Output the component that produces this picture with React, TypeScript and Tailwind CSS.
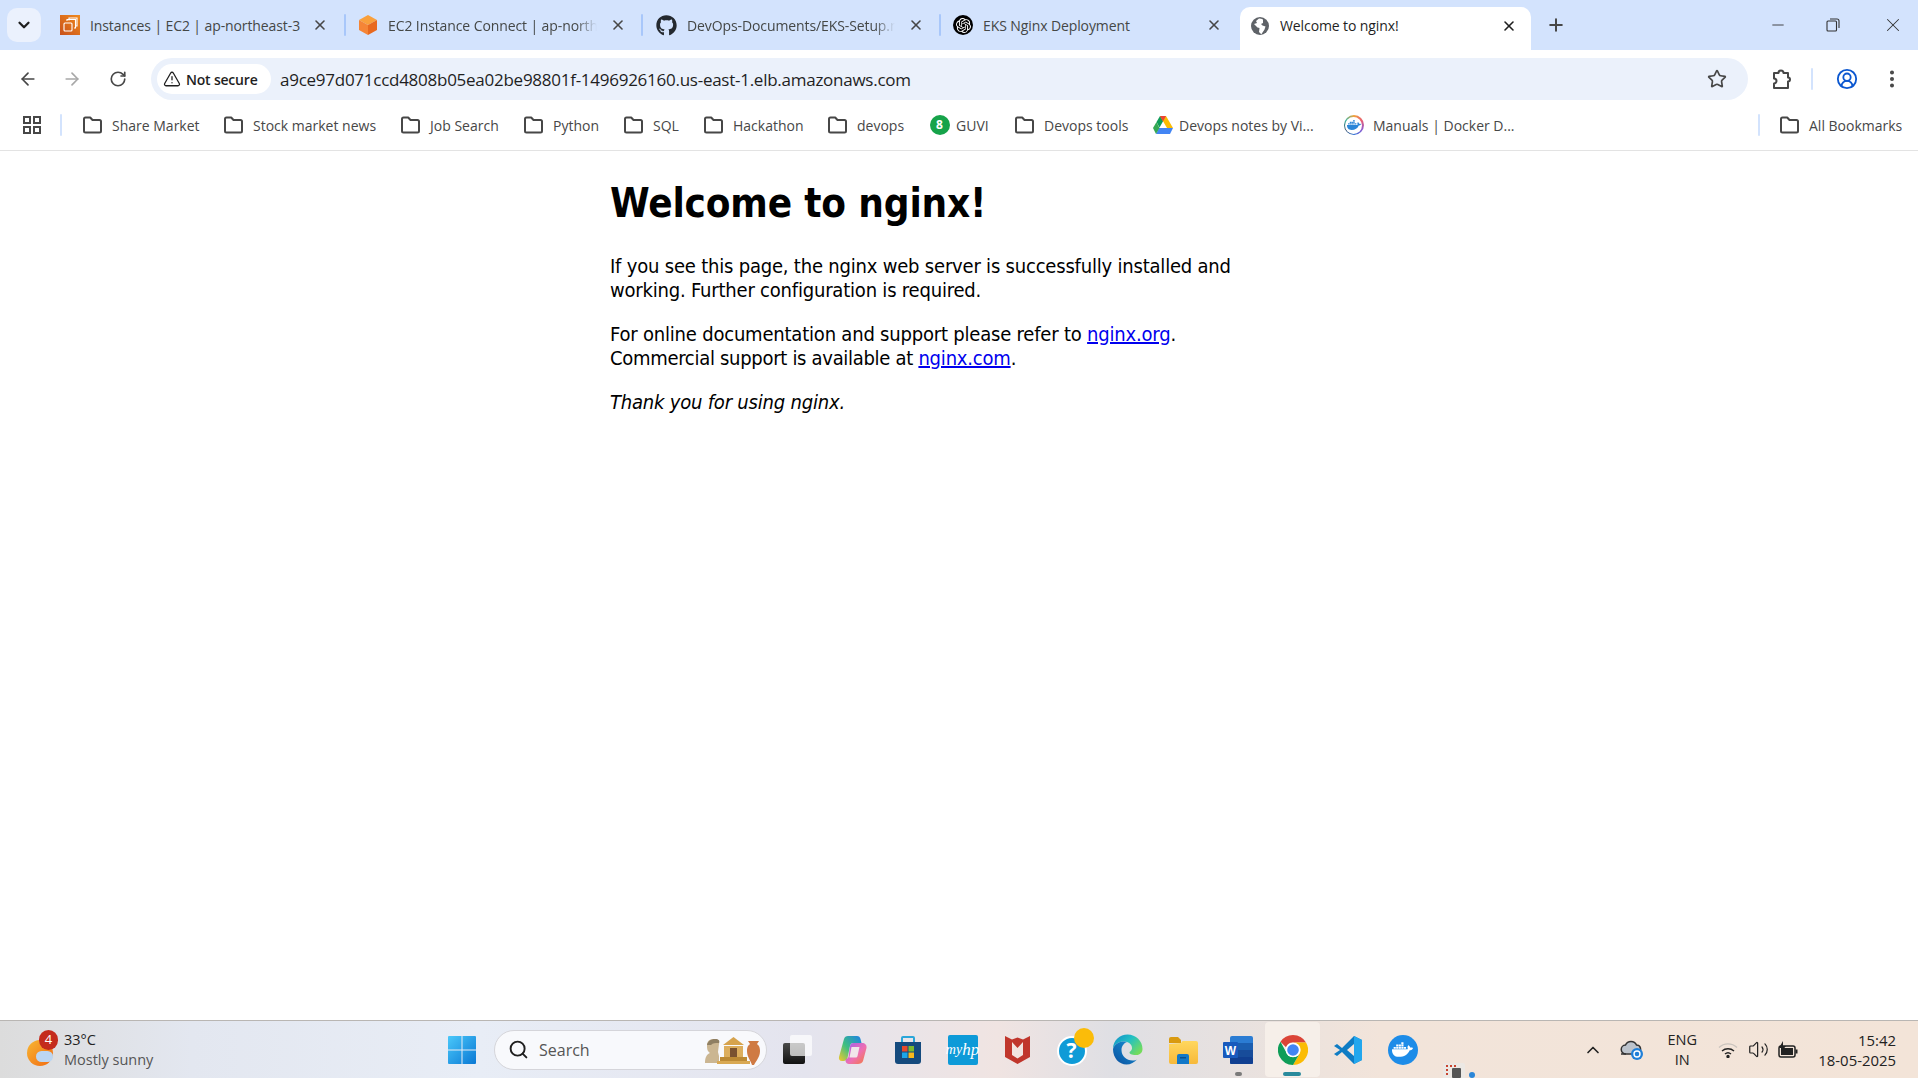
import React from "react";
import { ChevronDown, X, Plus, Minus, ArrowLeft, ArrowRight, RotateCw, Star, TriangleAlert, CircleUserRound, EllipsisVertical, Search, ChevronUp, Volume2 } from "lucide-react";
import { FaGithub, FaDocker } from "react-icons/fa";
import { SiOpenai } from "react-icons/si";

const Folder = () => (
  <svg width="21" height="18" viewBox="0 0 21 18" fill="none" stroke="#474747" strokeWidth="2" className="shrink-0">
    <path d="M2 3a1.5 1.5 0 0 1 1.5-1.5h4.7l2.3 2.5h7A1.5 1.5 0 0 1 19 5.500V15a1.500 1.500 0 0 1-1.500 1.500h-14A1.500 1.500 0 0 1 2 15z" strokeLinejoin="round" />
  </svg>
);
const Ec2 = () => (
  <svg width="20" height="20" viewBox="0 0 20 20" className="shrink-0">
    <defs><linearGradient id="ec" x1="0" y1="1" x2="1" y2="0"><stop offset="0" stopColor="#c8511b" /><stop offset="1" stopColor="#f08a1d" /></linearGradient></defs>
    <rect width="20" height="20" fill="url(#ec)" />
    <g fill="none" stroke="#fff" strokeWidth="1.100"><rect x="4" y="8" width="8" height="8" rx="1" /><path d="M7 6V4.500h8.500V13H14" /><path d="M9 5.500V3h8v8h-1.500" /></g>
  </svg>
);
const Cube = () => (
  <svg width="20" height="22" viewBox="0 0 20 22" className="shrink-0">
    <polygon points="10,1 19,6 10,11 1,6" fill="#f9a03c" /><polygon points="1,6 10,11 10,21 1,16" fill="#f58536" /><polygon points="19,6 10,11 10,21 19,16" fill="#e8691f" />
  </svg>
);
const GlobeFill = () => (
  <svg width="20" height="20" viewBox="0 0 20 20" className="shrink-0">
    <circle cx="10" cy="10" r="9" fill="#5f6368" />
    <path d="M9 2.500 6 5 7 7l-3 1 3.500 3.500 2 .5-.5 4 2 2 .5-.1 3-4.400 1-3-3-1-1.500-1.500 2-1V3.500A7.500 7.500 0 0 0 9 2.500z" fill="#fff" />
  </svg>
);
const Drive = () => (
  <svg width="20" height="18" viewBox="0 0 20 18" className="shrink-0">
    <polygon points="7,0 13,0 6.500,11.500 3.500,6" fill="#0f9d58" /><polygon points="13,0 20,12 14,12 7,0" fill="#fbbc04" /><polygon points="20,12 17,18 3,18 6,12" fill="#4285f4" /><polygon points="0,12 3.500,6 6.500,12 3,18" fill="#34a853" /><polygon points="7,0 13,0 10,5.500" fill="#ea4335" />
  </svg>
);
const Guvi = () => (
  <span className="flex h-5 w-5 shrink-0 items-center justify-center rounded-full bg-[#16a34a] text-[12px] font-bold leading-none text-white">8</span>
);
const DockerBadge = () => (
  <span className="flex h-5 w-5 shrink-0 items-center justify-center rounded-full bg-[conic-gradient(#f2a33a,#e85d75,#8e5bd0,#2a6fd6,#1f3d5c,#3fb5a0,#f2a33a)]">
    <span className="flex h-[17px] w-[17px] items-center justify-center rounded-full bg-white"><FaDocker size={14} color="#2a86d8" /></span>
  </span>
);
const Grid = () => (
  <svg width="20" height="18" viewBox="0 0 20 18" fill="none" stroke="#474747" strokeWidth="2" className="shrink-0">
    <rect x="2" y="1" width="6" height="6" /><rect x="12" y="1" width="6" height="6" /><rect x="2" y="11" width="6" height="6" /><rect x="12" y="11" width="6" height="6" />
  </svg>
);
const Puzzle = () => (
  <svg width="22" height="22" viewBox="0 0 22 22" fill="none" stroke="#474747" strokeWidth="2" strokeLinejoin="round" className="shrink-0">
    <path d="M4 5h4.500a2.500 2.500 0 0 1 5 0H18v4.500a2 2 0 0 1 0 4V20H4v-4.500a2.500 2.500 0 0 0 0-5z" />
  </svg>
);

const Tab = ({ icon, title, className, textClass }: { icon: React.ReactNode; title: string; className: string; textClass: string }) => (
  <div className={`flex h-full shrink-0 items-center ${className}`}>
    {icon}
    <span className={`ml-[10px] overflow-hidden whitespace-nowrap text-[14px] tracking-[-0.1px] text-[#444746] ${textClass}`}>{title}</span>
  </div>
);
const TabClose = ({ color = "#474747" }: { color?: string }) => <X size={16} color={color} strokeWidth={2.4} className="shrink-0" />;
const Sep = ({ className }: { className: string }) => <span className={`h-[22px] w-[2px] shrink-0 rounded bg-[#a8c7fa] ${className}`} />;

const Mark = ({ icon, label, w }: { icon: React.ReactNode; label: string; w: string }) => (
  <div className="flex shrink-0 items-center gap-[9px]">
    <span className="flex w-[21px] justify-center">{icon}</span>
    <span className={`whitespace-nowrap text-[14px] text-[#474747] ${w}`}>{label}</span>
  </div>
);

const TaskIcon = ({ children }: { children: React.ReactNode }) => (
  <div className="flex h-[55px] w-[55px] shrink-0 items-center justify-center">{children}</div>
);

export default function App() {
  return (
    <div className="flex h-[1078px] w-[1918px] flex-col overflow-hidden bg-white font-['Open_Sans','Noto_Sans',sans-serif]">
      {/* Tab strip */}
      <div className="flex h-[50px] shrink-0 items-center bg-[#d3e3fd] pl-[7px]">
        <div className="flex h-[34px] w-[34px] shrink-0 items-center justify-center rounded-[10px] bg-[#ebf1fd]">
          <ChevronDown size={18} color="#1f1f1f" strokeWidth={3} />
        </div>
        <Tab className="ml-[19px] w-[252px]" icon={<Ec2 />} title="Instances | EC2 | ap-northeast-3" textClass="w-[215px]" />
        <TabClose />
        <Sep className="ml-[16px]" />
        <Tab className="ml-[12px] w-[252px]" icon={<Cube />} title="EC2 Instance Connect | ap-northeast-3" textClass="w-[209px] [mask-image:linear-gradient(90deg,#000_90%,transparent)]" />
        <TabClose />
        <Sep className="ml-[15px]" />
        <Tab className="ml-[13px] w-[252px]" icon={<FaGithub size={21} color="#24292f" className="shrink-0" />} title="DevOps-Documents/EKS-Setup.md" textClass="w-[208px] [mask-image:linear-gradient(90deg,#000_90%,transparent)]" />
        <TabClose />
        <Sep className="ml-[15px]" />
        <Tab className="ml-[12px] w-[253px]" icon={<span className="flex h-5 w-5 shrink-0 items-center justify-center rounded-full bg-black"><SiOpenai size={15} color="#fff" /></span>} title="EKS Nginx Deployment" textClass="w-[205px]" />
        <TabClose />
        {/* Active tab */}
        <div className="relative ml-[18px] flex h-[43px] w-[291px] shrink-0 items-center self-end rounded-t-[10px] bg-white pb-[6px] pl-[10px]">
          <GlobeFill />
          <span className="ml-[10px] w-[221px] whitespace-nowrap text-[14px] tracking-[-0.1px] text-[#1f1f1f]">Welcome to nginx!</span>
          <TabClose color="#1f1f1f" />
        </div>
        <Plus size={20} color="#474747" strokeWidth={2.4} className="ml-[15px] shrink-0" />
        <div className="ml-auto flex items-center">
          <Minus size={18} color="#333" strokeWidth={1.200} className="mr-[38px]" />
          <svg width="16" height="16" viewBox="0 0 16 16" fill="none" stroke="#333" strokeWidth="1.100" className="mr-[41px]"><rect x="2" y="4" width="9.500" height="10" rx="1" /><path d="M5 2h7a2 2 0 0 1 2 2v7" /></svg>
          <X size={22} color="#333" strokeWidth={1.100} className="mr-[14px]" />
        </div>
      </div>

      {/* Toolbar */}
      <div className="flex h-[56px] shrink-0 items-center rounded-t-[10px] bg-white pt-[2px]">
        <ArrowLeft size={20} color="#474747" strokeWidth={2} className="ml-[18px] shrink-0" />
        <ArrowRight size={20} color="#a8a8a8" strokeWidth={2} className="ml-[24px] shrink-0" />
        <RotateCw size={18} color="#474747" strokeWidth={2.2} className="ml-[27px] shrink-0" />
        <div className="ml-[24px] flex h-[42px] w-[1597px] shrink-0 items-center rounded-full bg-[#ebf1fb] pl-[6px]">
          <div className="flex h-[30px] w-[114px] shrink-0 items-center rounded-full bg-white pl-[6px]">
            <TriangleAlert size={18} color="#1f1f1f" strokeWidth={1.700} className="shrink-0" />
            <span className="ml-[5px] whitespace-nowrap text-[14px] font-semibold tracking-[-0.2px] text-[#1f1f1f]">Not secure</span>
          </div>
          <span className="ml-[9px] mt-[2px] whitespace-nowrap text-[17px] tracking-[-0.26px] text-[#1f1f1f]">a9ce97d071ccd4808b05ea02be98801f-1496926160.us-east-1.elb.amazonaws.com</span>
          <Star size={20} color="#474747" strokeWidth={2} className="ml-auto mr-[21px] shrink-0" />
        </div>
        <span className="ml-[22px] flex"><Puzzle /></span>
        <span className="ml-[19px] h-[22px] w-[2px] shrink-0 rounded bg-[#d3e3fd]" />
        <CircleUserRound size={22} color="#0b57d0" strokeWidth={2} className="ml-[23px] shrink-0" />
        <EllipsisVertical size={22} color="#474747" strokeWidth={2.4} className="ml-[23px] shrink-0" />
      </div>

      {/* Bookmarks */}
      <div className="flex h-[45px] shrink-0 items-center gap-[23px] border-b border-[#e3e3e3] pb-[6px] pl-[22px]">
        <Grid />
        <span className="-ml-[5px] -mr-[3px] h-[22px] w-[2px] shrink-0 rounded bg-[#d3e3fd]" />
        <Mark icon={<Folder />} label="Share Market" w="w-[88px]" />
        <Mark icon={<Folder />} label="Stock market news" w="w-[124px]" />
        <Mark icon={<Folder />} label="Job Search" w="w-[70px]" />
        <Mark icon={<Folder />} label="Python" w="w-[47px]" />
        <Mark icon={<Folder />} label="SQL" w="w-[27px]" />
        <Mark icon={<Folder />} label="Hackathon" w="w-[71px]" />
        <Mark icon={<Folder />} label="devops" w="w-[49px]" />
        <Mark icon={<Guvi />} label="GUVI" w="w-[35px] -ml-[3px]" />
        <Mark icon={<Folder />} label="Devops tools" w="w-[85px]" />
        <Mark icon={<Drive />} label="Devops notes by Vi..." w="w-[141px] -ml-[3px]" />
        <Mark icon={<DockerBadge />} label="Manuals | Docker D..." w="w-[141px]" />
        <span className="ml-auto h-[22px] w-[2px] shrink-0 rounded bg-[#d3e3fd]" />
        <div className="-ml-[4px] mr-[14px]"><Mark icon={<Folder />} label="All Bookmarks" w="w-[95px]" /></div>
      </div>

      {/* Page */}
      <main className="flex-1 overflow-hidden font-['DejaVu_Sans_Condensed','DejaVu_Sans',sans-serif] text-black">
        <div className="mx-auto w-[700px] pt-[29px] pl-[1px]">
          <h1 className="text-[40px] font-bold leading-[46px] tracking-[-0.15px]">Welcome to nginx!</h1>
          <div className="mt-[28px] text-[20px] leading-[24px] tracking-[-0.2px]">
            <p>If you see this page, the nginx web server is successfully installed and<br />working. Further configuration is required.</p>
            <p className="mt-[20px]">For online documentation and support please refer to <a className="text-[#0000ee] underline">nginx.org</a>.<br /><span className="tracking-[-0.3px]">Commercial support is available at </span><a className="text-[#0000ee] underline">nginx.com</a>.</p>
            <p className="mt-[20px] italic">Thank you for using nginx.</p>
          </div>
        </div>
      </main>

      {/* Taskbar */}
      <div className="relative flex h-[58px] shrink-0 items-center border-t border-[#b9b6b3] bg-[linear-gradient(90deg,#dcdcdc_0%,#e3e7f0_10%,#e8edf6_25%,#e4e4ee_42%,#f0e4e2_52%,#dfdfe4_58%,#f2e4da_72%,#f3e4d8_100%)]">
        <div className="relative ml-[27px] h-[36px] w-[30px] shrink-0">
          <span className="absolute left-0 top-[8px] h-[26px] w-[26px] rounded-full bg-[linear-gradient(135deg,#f7b733,#f26a12)]" />
          <span className="absolute left-[9px] top-[19px] h-[11px] w-[17px] rounded-full bg-[#bcd6f2]" />
          <span className="absolute left-[12px] top-[-2px] flex h-[20px] w-[19px] items-center justify-center rounded-full bg-[#c42b1c] text-[13px] leading-none text-white">4</span>
        </div>
        <div className="ml-[7px] flex w-[100px] shrink-0 flex-col text-[14.5px] leading-[20px]">
          <span className="text-[#222]">33°C</span>
          <span className="whitespace-nowrap text-[#555]">Mostly sunny</span>
        </div>
        <svg width="30" height="30" viewBox="0 0 30 30" className="ml-[283px] shrink-0">
          <defs><linearGradient id="win" x1="0" y1="0" x2="1" y2="1"><stop offset="0" stopColor="#4ac8fa" /><stop offset="1" stopColor="#0a78d4" /></linearGradient></defs>
          <path d="M1 2a1 1 0 0 1 1-1h12.500v13.500H1zM15.500 1H28a1 1 0 0 1 1 1v12.500H15.500zM1 15.500h13.500V29H2a1 1 0 0 1-1-1zM15.500 15.500H29V28a1 1 0 0 1-1 1H15.500z" fill="url(#win)" />
        </svg>
        {/* Search */}
        <div className="ml-[17px] flex h-[40px] w-[273px] shrink-0 items-center rounded-full border border-[#d5d5da] bg-[#f8f9fc] pl-[13px]">
          <Search size={21} color="#1f1f1f" strokeWidth={2.2} className="shrink-0" />
          <span className="ml-[10px] text-[16px] text-[#555]">Search</span>
          <svg width="58" height="32" viewBox="0 0 58 32" className="ml-auto mr-[5px] shrink-0">
            <path d="M2 29c0-6 2-9 5-10-3-2-3-5-3-8 0-4 3-6 7-6s6 2 5 5l-1 8 1 4v7z" fill="#cbb692" />
            <path d="M4 11c1-4 4-6 8-6s5 2 4 4c-4 0-6 0-8 2z" fill="#8f7f63" />
            <rect x="14" y="27" width="33" height="3" fill="#d9a953" />
            <rect x="17" y="23" width="27" height="4" fill="#bc8a35" />
            <polygon points="20,11 41,11 30.500,3" fill="#d6a34d" />
            <rect x="21" y="12" width="19" height="11" fill="#dcae5e" />
            <rect x="27" y="14" width="7" height="9" fill="#7a5230" />
            <path d="M45 7h11l-2 3c1 1 3 2 3 7 0 6-4 10-6 14h-2c-1-4-5-8-5-14 0-5 2-6 3-7z" fill="#cf7a43" />
          </svg>
        </div>
        <div className="ml-[3px] flex shrink-0 items-center">
          <TaskIcon>
            <div className="relative h-[29px] w-[29px]">
              <span className="absolute bottom-0 left-0 h-[21px] w-[22px] rounded-[2px] bg-[linear-gradient(180deg,#4a4a4a,#111)]" />
              <span className="absolute right-0 top-0 h-[21px] w-[22px] rounded-[2px] bg-white/70" />
            </div>
          </TaskIcon>
          <TaskIcon>
            <svg width="30" height="30" viewBox="0 0 30 30" fill="none">
              <defs>
                <linearGradient id="co1" x1="0" y1="1" x2="1" y2="0"><stop offset="0" stopColor="#f7c92b" /><stop offset="0.45" stopColor="#3fc07f" /><stop offset="1" stopColor="#1c7fe8" /></linearGradient>
                <linearGradient id="co2" x1="0" y1="0" x2="1" y2="1"><stop offset="0" stopColor="#9a5ff0" /><stop offset="0.55" stopColor="#ee6fb2" /><stop offset="1" stopColor="#f37a3a" /></linearGradient>
              </defs>
              <path d="M10 1h9c2 0 3 1 3.500 3l1 4h-8c-2 0-3 1-3.500 3l-2.500 12c-.5 2-2 3-4 3H4C1.500 26 .5 24 1 22L6 4c.5-2 2-3 4-3z" fill="url(#co1)" />
              <path d="M20 29h-9c-2 0-3-1-3.500-3l.5-2c1 0 2-1 2.500-2L12 11c.5-2 1.500-3 3.500-3H24c3 0 5 2 4.500 5L25 26c-.5 2-3 3-5 3z" fill="url(#co2)" />
              <path d="M13.500 12h8l-2 9c-.3 1-1 1.500-2 1.500h-6z" fill="#f1e6ea" />
            </svg>
          </TaskIcon>
          <TaskIcon>
            <svg width="28" height="30" viewBox="0 0 28 30">
              <path d="M8 7V3a1 1 0 0 1 1-1h10a1 1 0 0 1 1 1v4" fill="none" stroke="#2ba6d9" strokeWidth="2" />
              <path d="M1 7h26v19a3 3 0 0 1-3 3H4a3 3 0 0 1-3-3z" fill="#154a7d" />
              <rect x="8" y="11" width="5.500" height="5.500" fill="#e8492b" /><rect x="14.500" y="11" width="5.500" height="5.500" fill="#7cba2f" /><rect x="8" y="17.500" width="5.500" height="5.500" fill="#1ba5e8" /><rect x="14.500" y="17.500" width="5.500" height="5.500" fill="#f9b81b" />
            </svg>
          </TaskIcon>
          <TaskIcon>
            <div className="flex h-[30px] w-[30px] items-center justify-center rounded-[2px] bg-[#0d9ad8] font-['Liberation_Serif',serif] text-[14px] italic leading-none text-white">my<span className="text-[17px]">hp</span></div>
          </TaskIcon>
          <TaskIcon>
            <svg width="27" height="30" viewBox="0 0 27 30"><path d="M1 1l7 3.500 5.500-2 5.500 2L26 1v21l-12.500 7L1 22z" fill="#c0362c" /><path d="M8 7l5.500 6L19 7v13l-5.500 3.500L8 20z" fill="#f2e4e0" /></svg>
          </TaskIcon>
          <TaskIcon>
            <div className="relative h-[32px] w-[32px]">
              <span className="absolute bottom-0 left-0 flex h-[30px] w-[30px] items-center justify-center rounded-full border-2 border-white bg-[#0f9bd7] text-[21px] font-bold leading-none text-white">?</span>
              <span className="absolute right-[-5px] top-[-6px] h-[20px] w-[20px] rounded-full bg-[#fbbc09]" />
            </div>
          </TaskIcon>
          <TaskIcon>
            <svg width="31" height="31" viewBox="0 0 31 31">
              <defs>
                <linearGradient id="ed1" x1="0" y1="1" x2="1" y2="0"><stop offset="0" stopColor="#0b4f9e" /><stop offset="1" stopColor="#1796d8" /></linearGradient>
                <linearGradient id="ed2" x1="0" y1="0" x2="1" y2="0.7"><stop offset="0" stopColor="#118bc9" /><stop offset="0.5" stopColor="#22c0c4" /><stop offset="1" stopColor="#74dc5c" /></linearGradient>
              </defs>
              <path d="M1 15C1 6 8 .5 15.500.5 24 .5 30.500 7 30.500 15c0 3.500-2.500 6-6 6-3 0-7-.5-7-2.500 0-1 2.500-1.500 2.500-4.500 0-4-4-6.500-8-6.500C7 7.500 2.500 10 1 15z" fill="url(#ed2)" />
              <path d="M1 15c1.500-5 6-7.500 11-7.500 2 0 3 .5 3 .5-3 1-5.500 4-5.500 8 0 6 5 10.500 11 10.500 2 0 4-.5 5-1.500-3 3.500-7 5.500-11 5.500C7 30.500 1 24 1 15z" fill="url(#ed1)" />
            </svg>
          </TaskIcon>
          <TaskIcon>
            <svg width="30" height="28" viewBox="0 0 30 28">
              <defs><linearGradient id="fo" x1="0" y1="0" x2="0" y2="1"><stop offset="0" stopColor="#ffd75e" /><stop offset="1" stopColor="#f7b93a" /></linearGradient></defs>
              <path d="M1 3a2 2 0 0 1 2-2h7l3 3v3H1z" fill="#d99a10" /><path d="M1 8l12-1 1.500-2H28a2 2 0 0 1 2 2v19a2 2 0 0 1-2 2H3a2 2 0 0 1-2-2z" fill="url(#fo)" />
              <path d="M9 20a2 2 0 0 1 2-2h8a2 2 0 0 1 2 2v8H9z" fill="#1278c8" /><rect x="12" y="21" width="6" height="1.500" fill="#0b4f8c" />
            </svg>
          </TaskIcon>
          <div className="relative">
            <TaskIcon>
              <svg width="30" height="30" viewBox="0 0 30 30"><rect x="7" y="1" width="23" height="28" rx="2" fill="#2b7cd3" /><rect x="7" y="8" width="23" height="7" fill="#1b5eb0" /><rect x="7" y="15" width="23" height="7" fill="#174c9a" /><rect x="7" y="22" width="23" height="7" rx="1" fill="#103f91" /><rect x="0" y="7" width="15" height="16" rx="1" fill="#185abd" /><text x="7.500" y="20" textAnchor="middle" fontSize="12" fontWeight="700" fill="#fff" fontFamily="Liberation Sans">W</text></svg>
            </TaskIcon>
            <span className="absolute bottom-[1px] left-[25px] h-[4px] w-[7px] rounded-full bg-[#7a7a7a]" />
          </div>
          <div className="relative rounded-[4px] bg-[#f6efe9]">
            <TaskIcon>
              <svg width="30" height="30" viewBox="0 0 30 30">
                <path d="M15 0a15 15 0 0 1 13 7.500H15a7.500 7.500 0 0 0-7 4.700L2.500 6.700A15 15 0 0 1 15 0z" fill="#db4437" />
                <path d="M28 7.500A15 15 0 0 1 15 30l6.500-11.300A7.500 7.500 0 0 0 21.500 11 7.500 7.500 0 0 0 15 7.500z" fill="#fbbc04" />
                <path d="M15 30A15 15 0 0 1 2.500 6.700L9 18.700A7.500 7.500 0 0 0 21.500 18.700z" fill="#0f9d58" />
                <circle cx="15" cy="15" r="7.300" fill="#fff" /><circle cx="15" cy="15" r="5.800" fill="#4285f4" />
              </svg>
            </TaskIcon>
            <span className="absolute bottom-[1px] left-[18px] h-[4px] w-[18px] rounded-full bg-[#2a8a9c]" />
          </div>
          <TaskIcon>
            <svg width="30" height="30" viewBox="0 0 30 30"><path d="M21 1l8 4v20l-8 4L9 17l-5 4-3-2 6-4-6-4 3-2 5 4z" fill="#0e7cc4" /><path d="M21 1l8 4v20l-8 4z" fill="#22a7ee" /><path d="M21 9l-7 6 7 6z" fill="#f3e6de" /></svg>
          </TaskIcon>
          <TaskIcon>
            <div className="flex h-[30px] w-[30px] items-center justify-center rounded-full bg-[#1d8ce8]"><FaDocker size={21} color="#fff" /></div>
          </TaskIcon>
        </div>
        {/* Stray tray preview peeking at the bottom edge */}
        <div className="absolute bottom-0 left-[1443px] h-[15px] w-[22px] rounded-t-[2px] bg-[#ece8e4]">
          <span className="absolute left-[3px] top-[2px] h-[10px] w-[10px] border-l-2 border-t-2 border-dotted border-[#c8432f]" />
          <span className="absolute left-[9px] top-[5px] h-[10px] w-[9px] rounded-[1px] bg-[#555]" />
          <span className="absolute left-[26px] top-[9px] h-[6px] w-[6px] rounded-full bg-[#2a86d8]" />
        </div>
        {/* Tray */}
        <ChevronUp size={20} color="#222" strokeWidth={2} className="ml-auto shrink-0" />
        <svg width="24" height="22" viewBox="0 0 24 22" className="ml-[17px] shrink-0"><path d="M6 15a4.500 4.500 0 0 1-.5-9 6 6 0 0 1 11 0 4 4 0 0 1 2 7.500" fill="#bcc3cc" stroke="#333" strokeWidth="1.500" /><path d="M1 15h14" stroke="#333" strokeWidth="1.500" /><circle cx="17" cy="15" r="6" fill="#1f7fd8" /><circle cx="17" cy="15" r="3" fill="none" stroke="#fff" strokeWidth="1.400" /></svg>
        <div className="ml-[20px] flex w-[36px] shrink-0 flex-col items-center text-[14.5px] leading-[20px] text-[#222]"><span>ENG</span><span>IN</span></div>
        <svg width="20" height="16" viewBox="0 0 20 16" fill="none" stroke="#222" strokeWidth="1.400" className="ml-[18px] shrink-0"><path d="M1 5.500a13 13 0 0 1 18 0" stroke="#c9c3bd" /><path d="M4 9a9 9 0 0 1 12 0" /><path d="M7 12a4.500 4.500 0 0 1 6 0" /><circle cx="10" cy="14.500" r="1" fill="#222" /></svg>
        <Volume2 size={21} color="#222" strokeWidth={1.400} className="ml-[10px] shrink-0" />
        <svg width="22" height="18" viewBox="0 0 22 18" className="ml-[8px] shrink-0"><rect x="2" y="5" width="16" height="11" rx="2" fill="none" stroke="#222" strokeWidth="1.500" /><rect x="4" y="7" width="12" height="7" fill="#222" /><rect x="18.500" y="8.500" width="2" height="4" fill="#222" /><path d="M6 0 2 7h3l-1 4 5-6H6z" fill="#222" /></svg>
        <div className="ml-[19px] mr-[22px] flex shrink-0 flex-col items-end text-[14.9px] leading-[20px] text-[#222]"><span>15:42</span><span>18-05-2025</span></div>
      </div>
    </div>
  );
}
